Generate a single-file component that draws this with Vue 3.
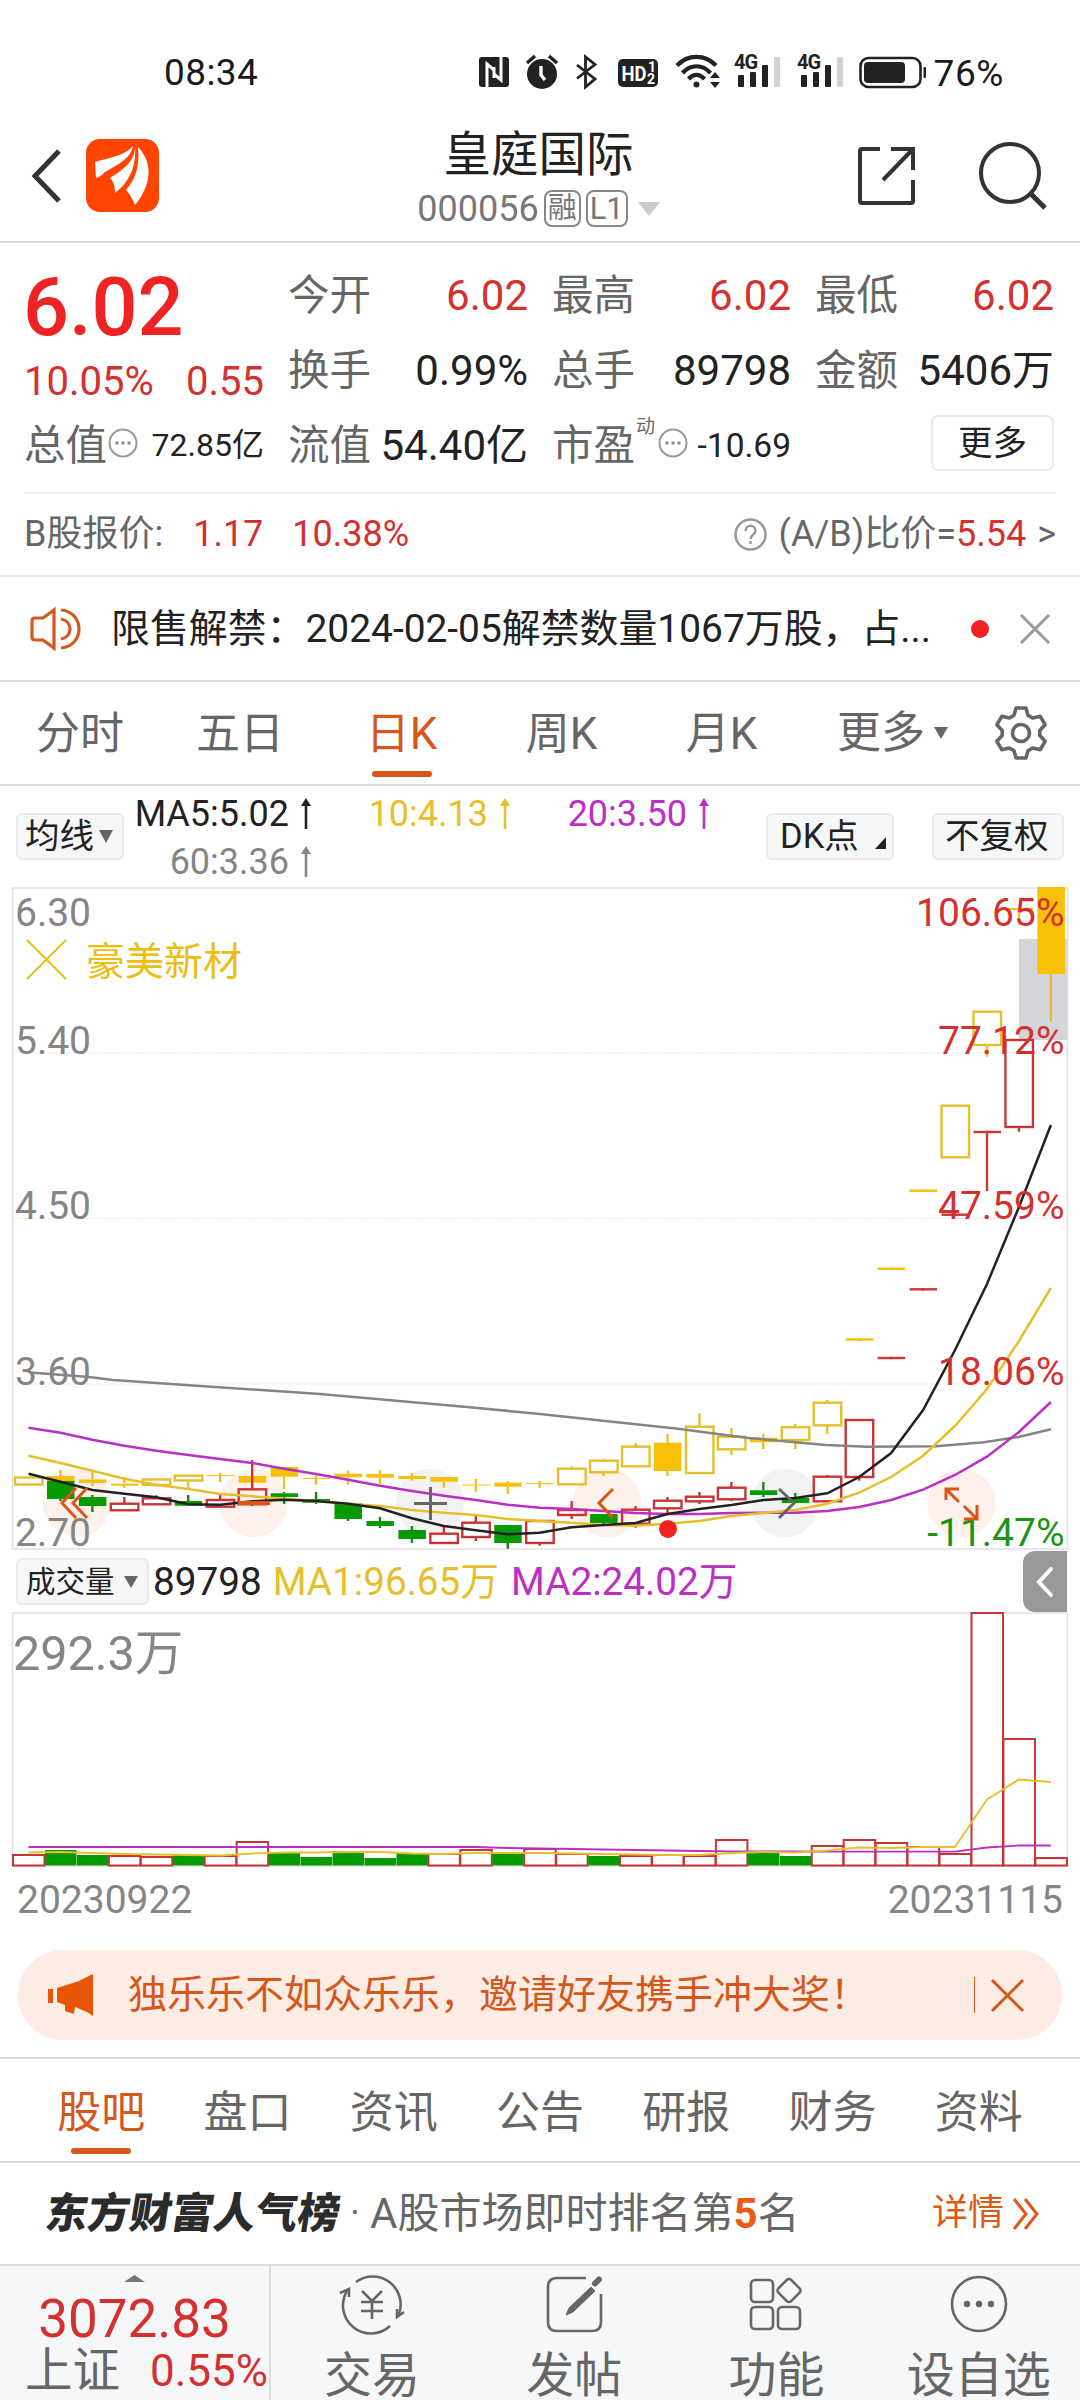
<template>
  <div class="page">
    <div class="status-bar">
      <span class="clock">08:34</span>
      <div class="status-right">
        <svg class="status-icons" width="454" height="40" viewBox="474 52 454 40">
          <!-- nfc -->
          <rect x="477" y="57" width="30" height="30" rx="3" fill="#222" />
          <path d="M485 87V64l7 6v8M499 57v23l-7-6v-7" fill="none" stroke="#fff" stroke-width="3" />
          <!-- alarm -->
          <circle cx="540" cy="74" r="15" fill="#222" />
          <path d="M525 63l8-7M555 63l-8-7" stroke="#222" stroke-width="3.4" />
          <path d="M539 66v9l4 5" fill="none" stroke="#fff" stroke-width="3.4" />
          <!-- bluetooth -->
          <path d="M575 65l18 14-9.500 8V57l9.500 7.500-18 14" fill="none" stroke="#222" stroke-width="2.800" />
          <!-- hd -->
          <rect x="616" y="59" width="40" height="28" rx="5" fill="#222" />
          <text x="619.500" y="81" class="hd" font-size="20" textLength="25" lengthAdjust="spacingAndGlyphs">HD</text>
          <text x="646" y="72" class="hd" font-size="14">1</text>
          <text x="645" y="84" class="hd" font-size="14">2</text>
          <!-- wifi -->
          <g fill="none" stroke="#222" stroke-width="4.200">
            <path d="M675 65.500c11-11.500 28-11.500 39 0" />
            <path d="M680.500 73c8-9 20-9 28 0" />
            <path d="M686.500 79c5-5.500 11-5.500 16 0" />
          </g>
          <circle cx="694.500" cy="84.500" r="3" fill="#222" />
          <path d="M708 78l5-6 5 6zM708 82l5 6 5-6z" fill="#222" />
          <!-- signal -->
          <g v-for="x in [732, 795]" :key="x" :transform="`translate(${x} 0)`">
            <text x="0" y="69" class="net">4G</text>
            <rect x="4" y="75" width="6" height="12" rx="1" fill="#222" />
            <rect x="16" y="72" width="6" height="15" rx="1" fill="#222" />
            <rect x="28" y="65" width="6" height="22" rx="1" fill="#222" />
            <rect x="40" y="57" width="6" height="30" rx="1" fill="#d2d2d2" />
          </g>
          <!-- battery -->
          <rect x="858.500" y="58" width="60" height="29" rx="8" fill="none" stroke="#222" stroke-width="2.600" />
          <rect x="862" y="62" width="41" height="21" rx="4" fill="#222" />
          <rect x="921.500" y="67" width="2.500" height="11" rx="1" fill="#222" />
        </svg>
        <span class="battery-text">76%</span>
      </div>
    </div>

    <header class="header">
      <div class="header-left">
        <svg width="32" height="56" viewBox="0 0 32 56">
          <path d="M29 3L5 28l24 25" fill="none" stroke="#333" stroke-width="5" />
        </svg>
        <svg class="logo" width="73" height="73" viewBox="0 0 73 73">
          <rect width="73" height="73" rx="14" fill="#ff4400" />
          <path d="M47 7C38 17 22 19 9 23l1 16c4-1 6-3 9-6 14-8 26-14 28-26z" fill="#fff" />
          <path d="M49 8c0 14-11 22-25 31 4 4 5 9 5 15 8-6 22-20 20-46z" fill="#fff" />
          <path d="M52 8c2 20-3 33-12 43 4 4 7 10 9 15 12-14 22-38 3-58z" fill="#fff" />
        </svg>
      </div>
      <div class="header-title">
        <div class="stock-name">皇庭国际</div>
        <div class="stock-code">
          <span>000056</span>
          <span class="tag">融</span>
          <span class="tag">L1</span>
          <svg class="code-arrow" width="22" height="14" viewBox="0 0 22 14"><path d="M0 0h22L11 14z" fill="#ccc" /></svg>
        </div>
      </div>
      <div class="header-right">
        <svg width="58" height="60" viewBox="0 0 58 60" fill="none" stroke="#333" stroke-width="4">
          <path d="M23 3H5q-2 0-2 2v50q0 2 2 2h49q2 0 2-2V34" />
          <path d="M34 3h22v21M56 3L26 34" />
        </svg>
        <svg width="68" height="68" viewBox="0 0 68 68" fill="none" stroke="#333" stroke-width="4">
          <circle cx="31" cy="31" r="29" />
          <path d="M51 51l15 15" stroke-width="5" />
        </svg>
      </div>
    </header>

    <section class="quote">
      <div class="quote-main">
        <div class="price-box">
          <div class="price">6.02</div>
          <div class="change"><span>10.05%</span><span>0.55</span></div>
        </div>
        <div v-for="q in quotes" :key="q.label" class="quote-cell">
          <span class="quote-label">{{ q.label }}</span>
          <span :class="q.up ? 'up' : 'plain'">{{ q.value }}</span>
        </div>
        <div class="quote-cell first">
          <span class="quote-label">总值</span>
          <svg class="more-dot" width="30" height="30" viewBox="0 0 30 30">
            <circle cx="15" cy="15" r="13.500" fill="none" stroke="#999" stroke-width="2" />
            <path d="M7.500 15h3M13.500 15h3M19.500 15h3" stroke="#888" stroke-width="3" />
          </svg>
          <span class="plain small">72.85亿</span>
        </div>
        <div class="quote-cell">
          <span class="quote-label">流值</span>
          <span class="plain">54.40亿</span>
        </div>
        <div class="quote-cell">
          <span class="quote-label">市盈<sup>动</sup></span>
          <svg class="more-dot" width="30" height="30" viewBox="0 0 30 30">
            <circle cx="15" cy="15" r="13.500" fill="none" stroke="#999" stroke-width="2" />
            <path d="M7.500 15h3M13.500 15h3M19.500 15h3" stroke="#888" stroke-width="3" />
          </svg>
          <span class="plain small pe">-10.69</span>
        </div>
        <div class="quote-cell last"><button class="more-btn">更多</button></div>
      </div>
      <div class="b-share">
        <span>B股报价:</span>
        <span class="up b-price">1.17</span>
        <span class="up b-rate">10.38%</span>
        <svg class="help" width="33" height="33" viewBox="0 0 33 33">
          <circle cx="16.500" cy="16.500" r="15" fill="none" stroke="#999" stroke-width="2.500" />
          <path d="M11.500 13c0-7 10-7 10 0 0 4-5 3.500-5 8M16.500 23v3" fill="none" stroke="#999" stroke-width="2.500" />
        </svg>
        <span>(A/B)比价=<b class="up">5.54</b></span>
        <span class="gt">&gt;</span>
      </div>
    </section>

    <section class="notice">
      <svg width="52" height="44" viewBox="0 0 52 44" fill="none" stroke="#d4581b" stroke-width="3.200">
        <path d="M24 3L13 11H5q-3 0-3 3v16q0 3 3 3h8l11 8z" />
        <path d="M31 3c24 2 24 36 0 38M31 12c12 2 12 18 0 20" />
      </svg>
      <span class="notice-text">限售解禁：2024-02-05解禁数量1067万股，占...</span>
      <i class="notice-dot"></i>
      <svg width="30" height="30" viewBox="0 0 30 30"><path d="M1 1l28 28M29 1L1 29" stroke="#999" stroke-width="3" /></svg>
    </section>

    <nav class="k-tabs">
      <div v-for="t in kTabs" :key="t" class="k-tab" :class="{ active: t === '日K' }">{{ t }}</div>
      <div class="k-tab k-more">
        更多
        <svg width="14" height="12" viewBox="0 0 14 12"><path d="M0 0h14L7 12z" fill="#666" /></svg>
      </div>
      <svg width="56" height="56" viewBox="-28 -28 56 56" fill="none" stroke="#666" stroke-width="3.600">
        <polygon :points="gearPoints" stroke-linejoin="round" />
        <circle r="8.500" />
      </svg>
    </nav>

    <div class="ma-bar">
      <button class="chip">均线<svg width="14" height="13" viewBox="0 0 14 13"><path d="M0 0h14L7 13z" fill="#666" /></svg></button>
      <div class="ma-list">
        <span v-for="m in maList" :key="m.text" class="ma-item" :style="{ color: m.color }">
          {{ m.text }}
          <svg width="12" height="32" viewBox="0 0 12 32">
            <path d="M6 0l5 8H1z" fill="currentColor" /><path d="M6 4v27" stroke="currentColor" stroke-width="2.600" />
          </svg>
        </span>
      </div>
      <button class="chip dk">DK点<svg width="11" height="12" viewBox="0 0 11 12"><path d="M11 0v12H0z" fill="#222" /></svg></button>
      <button class="chip fq">不复权</button>
    </div>

    <svg class="k-chart" width="1080" height="664" viewBox="0 0 1080 664">
      <rect x="12.500" y="1" width="1055" height="661" fill="none" stroke="#e0e0e0" stroke-width="1.500" />
      <path v-for="y in [166, 331.5, 497]" :key="y" :d="`M13 ${y}H1067`" stroke="#ededed" stroke-width="1.500" stroke-dasharray="2 1.500" />
      <circle v-for="b in chartButtons" :key="b.x" :cx="b.x" cy="616" r="34" :fill="b.fill" />
      <rect x="1019" y="52" width="48" height="101" fill="#d3d5d8" />

      <g v-for="(series, s) in [overlay, candles]" :key="s" stroke-width="2.400">
        <g v-for="c in series" :key="c[0]">
          <path :d="wick(c)" :stroke="colors[c[5]].line" fill="none" />
          <rect
            :x="cx(c[0]) - 13.5" :y="c[1]" width="27.5" :height="c[2] - c[1]"
            :fill="c[6] ? 'none' : colors[c[5]].fill"
            :stroke="c[6] ? colors[c[5]].line : 'none'"
          />
        </g>
      </g>

      <g fill="none" stroke-width="2.500">
        <polyline :points="ma60" stroke="#858585" />
        <polyline :points="line(ma20)" stroke="#bb2fc4" />
        <polyline :points="line(ma10)" stroke="#e6c02c" />
        <polyline :points="line(ma5)" stroke="#222" />
      </g>

      <g class="axis">
        <text v-for="(t, i) in leftAxis" :key="t" x="15" :y="axisY[i]" fill="#858585">{{ t }}</text>
        <text
          v-for="(t, i) in rightAxis" :key="t" x="1064.500" :y="axisY[i]"
          text-anchor="end" :fill="i === 4 ? '#1c9413' : '#d3302f'"
        >{{ t }}</text>
        <text x="86" y="88" fill="#ecbe12">豪美新材</text>
      </g>
      <path d="M27 53l39 39M66 53L27 92" stroke="#eabf1c" stroke-width="2" />

      <g fill="none" stroke="#dd5514" stroke-width="3">
        <path d="M76 601L62 616l14 15M87 601L73 616l14 15" />
        <path d="M238 616h32" stroke-width="4" />
        <path d="M613 602l-14 14 14 15" />
        <path d="M946 613v-11h13M947 603l12 12M977 618v14h-13M976 631l-12-12" />
      </g>
      <path d="M414 616.500h33M430.500 600v33M779 602l15 14-15 15" fill="none" stroke="#666" stroke-width="3" />
      <circle cx="668" cy="642" r="9" fill="#f02222" />
    </svg>

    <div class="vol-bar">
      <button class="chip vol">成交量<svg width="14" height="12" viewBox="0 0 14 12"><path d="M0 0h14L7 12z" fill="#666" /></svg></button>
      <span class="vol-now">89798</span>
      <span class="vol-ma1">MA1:96.65万</span>
      <span class="vol-ma2">MA2:24.02万</span>
      <div class="fold">
        <svg width="18" height="30" viewBox="0 0 18 30"><path d="M15 2L3 15l12 13" fill="none" stroke="#fff" stroke-width="4" stroke-linecap="round" /></svg>
      </div>
    </div>

    <svg class="vol-chart" width="1080" height="256" viewBox="0 0 1080 256">
      <rect x="12.500" y="1" width="1055" height="253" fill="none" stroke="#e0e0e0" stroke-width="1.500" />
      <rect
        v-for="(v, i) in volumes" :key="i"
        :x="cx(i) - 15.5" :y="254 - Math.abs(v)" width="31.5" :height="Math.abs(v) - 0.5"
        :fill="v < 0 ? '#069a04' : '#fff'" :stroke="v < 0 ? 'none' : '#c93434'" stroke-width="2"
      />
      <polyline :points="line(volMa2)" fill="none" stroke="#bb2fc4" stroke-width="1.800" />
      <polyline :points="line(volMa1)" fill="none" stroke="#e6c02c" stroke-width="1.800" />
      <text x="13" y="58" font-size="48.500" fill="#858585">292.3万</text>
    </svg>
    <div class="dates"><span>20230922</span><span>20231115</span></div>

    <div class="banner">
      <svg width="46" height="42" viewBox="0 0 46 42">
        <path d="M0 15h5v14H0zM9 14l22-7L45 0v42l-6-4-12-5-1 7-9-3v-6l-8-3z" fill="#e85505" />
      </svg>
      <span class="banner-text">独乐乐不如众乐乐，邀请好友携手冲大奖！</span>
      <i class="banner-sep"></i>
      <svg width="33" height="33" viewBox="0 0 33 33"><path d="M1 1l31 31M32 1L1 32" stroke="#d4581b" stroke-width="3" /></svg>
    </div>

    <nav class="info-tabs">
      <div v-for="(t, i) in infoTabs" :key="t" class="info-tab" :class="{ active: i === 0 }">{{ t }}</div>
    </nav>

    <section class="rank">
      <span class="rank-logo">东方财富人气榜</span>
      <span class="rank-sep">·</span>
      <span class="rank-text">A股市场即时排名第<b>5</b>名</span>
      <span class="rank-link">详情
        <svg width="28" height="32" viewBox="0 0 28 32"><path d="M2 1l12 15L2 31M13 1l12 15-12 15" fill="none" stroke="#dc5a18" stroke-width="3" /></svg>
      </span>
    </section>

    <footer class="footer">
      <div class="index">
        <svg width="21" height="7" viewBox="0 0 21 7"><path d="M0 7L10.500 0 21 7z" fill="#777" /></svg>
        <div class="index-value">3072.83</div>
        <div class="index-row"><span>上证</span><b>0.55%</b></div>
      </div>
      <div class="foot-item">
        <svg width="66" height="60" viewBox="0 0 66 60" fill="none" stroke="#666" stroke-width="2.600">
          <path d="M17 8a28 28 0 0 1 43 32M51 52A28 28 0 0 1 8 17" />
          <path d="M1 19l9-4 0 8M65 38l-7 5 0-8" />
          <path d="M23 17l10 10 10-10M33 27v18M22 28h22M22 37h22" />
        </svg>
        <span>交易</span>
      </div>
      <div class="foot-item">
        <svg width="60" height="60" viewBox="0 0 60 60" fill="none" stroke="#666" stroke-width="2.600">
          <path d="M42 4H13q-9 0-9 9v35q0 9 9 9h35q9 0 9-9V20" />
          <path d="M47 13l4 4-22 21-7 3 3-7z" fill="#666" stroke-width="1" />
          <path d="M51 9.500l4-4" stroke-width="6" stroke-linecap="round" />
        </svg>
        <span>发帖</span>
      </div>
      <div class="foot-item">
        <svg width="60" height="60" viewBox="0 0 60 60" fill="none" stroke="#666" stroke-width="2.600">
          <rect x="4" y="6" width="22" height="22" rx="4" />
          <rect x="4" y="33" width="22" height="22" rx="4" />
          <rect x="31" y="33" width="22" height="22" rx="4" />
          <rect x="33" y="7.500" width="18" height="18" rx="3" transform="rotate(45 42 16.500)" />
        </svg>
        <span>功能</span>
      </div>
      <div class="foot-item">
        <svg width="60" height="60" viewBox="0 0 60 60" fill="none" stroke="#666" stroke-width="2.600">
          <circle cx="30" cy="30" r="27" />
          <g fill="#666" stroke="none"><circle cx="18" cy="30" r="3.200" /><circle cx="30" cy="30" r="3.200" /><circle cx="42" cy="30" r="3.200" /></g>
        </svg>
        <span>设自选</span>
      </div>
    </footer>
  </div>
</template>

<script setup>
const quotes = [
  { label: '今开', value: '6.02', up: true },
  { label: '最高', value: '6.02', up: true },
  { label: '最低', value: '6.02', up: true },
  { label: '换手', value: '0.99%' },
  { label: '总手', value: '89798' },
  { label: '金额', value: '5406万' },
]

const kTabs = ['分时', '五日', '日K', '周K', '月K']
const infoTabs = ['股吧', '盘口', '资讯', '公告', '研报', '财务', '资料']

const maList = [
  { text: 'MA5:5.02', color: '#222' },
  { text: '10:4.13', color: '#e6c02c' },
  { text: '20:3.50', color: '#bb2fc4' },
  { text: '60:3.36', color: '#858585' },
]

const leftAxis = ['6.30', '5.40', '4.50', '3.60', '2.70']
const rightAxis = ['106.65%', '77.12%', '47.59%', '18.06%', '-11.47%']
const axisY = [39, 167, 332, 498, 658.5]

const chartButtons = [
  { x: 77, fill: '#fef0ea' },
  { x: 253.5, fill: '#fef0ea' },
  { x: 430, fill: '#f2f2f4' },
  { x: 607, fill: '#fef0ea' },
  { x: 785, fill: '#f2f2f4' },
  { x: 961.5, fill: '#fef0ea' },
]

const colors = {
  y: { line: '#e6c02c', fill: '#f7c004' },
  r: { line: '#c93434', fill: '#c93434' },
  g: { line: '#0c8c0a', fill: '#069a04' },
}

// [index, body top, body bottom, high, low, colour, hollow]
const overlay = [
  [0, 590.5, 597.5, 590.5, 597.5, 'y', 1],
  [1, 589, 594, 583, 594, 'y'],
  [2, 592.5, 596, 584, 599, 'y'],
  [3, 596.7, 598.7, 590, 601, 'y'],
  [4, 592.5, 598, 592.5, 600, 'y', 1],
  [5, 588.7, 593.5, 588.7, 602, 'y', 1],
  [6, 588, 589, 585.7, 595, 'y'],
  [7, 589, 595.7, 589, 601, 'y'],
  [8, 580, 589.7, 580, 602, 'y'],
  [9, 591, 592, 588.7, 597.7, 'y'],
  [10, 586.7, 590.3, 583.7, 597.7, 'y'],
  [11, 587, 590.7, 583, 597, 'y'],
  [12, 589, 592, 586, 593.7, 'y'],
  [13, 590, 594.7, 590, 600.7, 'y'],
  [14, 597.5, 598.5, 592, 604.7, 'y'],
  [15, 595.7, 599.7, 594, 607, 'y'],
  [16, 596, 597, 594, 601, 'y'],
  [17, 581.7, 597.3, 579.3, 597.3, 'y', 1],
  [18, 573.7, 585.3, 571.7, 589, 'y', 1],
  [19, 559.7, 579.3, 556, 579.3, 'y', 1],
  [20, 555.7, 584, 547, 589, 'y'],
  [21, 539.7, 586, 526, 586, 'y', 1],
  [22, 549.7, 562.3, 541, 568, 'y', 1],
  [23, 550.7, 555.3, 546.7, 562, 'y'],
  [24, 540.3, 553, 537, 562, 'y', 1],
  [25, 515.7, 538.3, 513, 547, 'y', 1],
  [26, 451.3, 453.7, 452, 453, 'y'],
  [27, 380.5, 382.9, 381, 382, 'y'],
  [28, 302.5, 304.9, 303, 304, 'y'],
  [29, 218.7, 270.3, 218.7, 270.3, 'y', 1],
  [30, 124.7, 158, 124.7, 169.7, 'y', 1],
  [31, 21, 23, 22, 38, 'y'],
  [32, 0, 87, 0, 134.7, 'y'],
]

const candles = [
  [1, 594, 612, 594, 614, 'g'],
  [2, 610, 619, 608, 625, 'g'],
  [3, 616.7, 623.3, 610, 623.3, 'r', 1],
  [4, 611.3, 617.3, 608.3, 617.3, 'r', 1],
  [5, 614, 618.7, 608, 618.7, 'g'],
  [6, 613, 619.7, 608, 619.7, 'r', 1],
  [7, 602.3, 617.3, 573, 619, 'r', 1],
  [8, 606.3, 610, 605, 617, 'g'],
  [9, 612, 615.7, 605, 617, 'g'],
  [10, 616.3, 632, 616.3, 634, 'g'],
  [11, 634, 639, 630, 641, 'g'],
  [12, 643, 652, 639, 656, 'g'],
  [13, 646.7, 656, 639, 656, 'r', 1],
  [14, 635.7, 650, 628, 654, 'r', 1],
  [15, 638, 656, 638, 661.7, 'g'],
  [16, 634, 656, 634, 658.7, 'r', 1],
  [17, 623, 628, 614, 632, 'r', 1],
  [18, 627, 636, 627, 637, 'g'],
  [19, 622.7, 636.7, 619, 640.7, 'r', 1],
  [20, 613.7, 621.3, 610, 626, 'r', 1],
  [21, 609.7, 614.3, 605, 617, 'r', 1],
  [22, 600.7, 612.3, 595, 614, 'r', 1],
  [23, 603.3, 608, 595, 610, 'g'],
  [24, 611, 616, 606, 616, 'g'],
  [25, 589.7, 614.3, 588, 614.3, 'r', 1],
  [26, 533, 590, 533, 593.7, 'r', 1],
  [27, 469.8, 472.2, 471, 472, 'r'],
  [28, 401.1, 403.5, 402, 403, 'r'],
  [29, 326.5, 328.9, 327, 328, 'r'],
  [30, 243.8, 246.2, 245, 304, 'r'],
  [31, 153, 240, 153, 244.7, 'r', 1],
]

const ma5 = [586.7, 594.7, 603, 606.7, 610.3, 617.3, 617.7, 614.3, 612.7, 614, 616.7, 621.3, 631.3, 639, 643.3, 647.3, 645.7, 640.3, 638, 636, 627, 622, 618, 613, 611, 606.3, 590, 566, 523, 463, 397, 320, 238]
const ma10 = [568.7, 576, 583.7, 591.7, 597.7, 602, 607, 609.3, 611.7, 614, 616.7, 619, 623, 625.7, 628, 632, 634, 635.7, 638, 638.7, 636.7, 634, 629, 626, 623, 616.7, 605.7, 590, 568.7, 539, 502, 454, 401]
const ma20 = [540.7, 545.7, 552.7, 558.7, 563.7, 568, 572, 576, 581.7, 587, 592.7, 598.7, 604, 608.7, 613, 617.7, 620.7, 622, 624, 626, 627, 627, 626, 625.7, 625.7, 624, 620, 613, 602.7, 588, 569.7, 545, 515]
const ma60 = '30,485.5 89,490 113,493 200,499 320,507 467,520 540,527 678,541.7 746,550.7 826,558 867,559.7 936,559.3 984,555.3 1018.6,550 1051,542.3'

// negative = falling day
const volumes = [11, -16, -11, 10, 9, -11, 10, 24, -13, -9, -15, -8, -13, 12, 16, -12, 17, 12, -10, 10, 11, 10, 26, -14, -10, 20, 26, 23, 19, 12, 253, 127, 8]
const volMa1 = [240.5, 240, 241, 242, 242.5, 243, 243.5, 241.5, 240.5, 240.5, 240, 240, 241.5, 242, 241, 241, 241, 241.5, 242, 242.5, 243, 243, 241, 240, 240.5, 238.5, 235.5, 236, 235, 235, 187.5, 167.5, 170]
const volMa2 = [235, 235, 235, 235, 235, 235, 235, 235, 235, 235, 235, 235, 235, 235, 235, 236, 236.5, 237, 237.5, 238, 238.5, 239, 239.3, 239.5, 239.5, 239.6, 239.6, 239.6, 239.6, 239.6, 235.5, 233.5, 233.5]

const cx = i => 28.5 + 31.95 * i

function line(values) {
  return values.map((v, i) => `${cx(i)},${v}`).join(' ')
}

function wick([i, top, bottom, high, low]) {
  return `M${cx(i)} ${high}V${top}M${cx(i)} ${bottom}V${low}`
}

const gearPoints = Array.from({ length: 6 }, (_, i) => i * 60 - 90)
  .flatMap(a => [[a - 22, 19], [a - 11, 25.5], [a + 11, 25.5], [a + 22, 19]])
  .map(([a, r]) => `${(Math.cos(a * Math.PI / 180) * r).toFixed(1)},${(Math.sin(a * Math.PI / 180) * r).toFixed(1)}`)
  .join(' ')
</script>

<style>
body { background: #fff; }
</style>

<style scoped>
.page {
  width: 1080px;
  height: 2400px;
  overflow: hidden;
  display: flex;
  flex-direction: column;
  font-family: Roboto, "Noto Sans CJK SC", sans-serif;
  color: #666;
  background: #fff;
}

.page > * { flex: none; box-sizing: border-box; }
svg { display: block; flex: none; overflow: visible; }
button { font-family: inherit; }
.up { color: #d3302f; font-weight: 400; }
.plain { color: #222; }

/* status bar */
.status-bar {
  height: 110px;
  padding: 34px 76px 0 164px;
  display: flex;
  align-items: center;
  justify-content: space-between;
  color: #1a1a1a;
}

.clock { font-size: 37px; letter-spacing: 0.4px; }
.status-right { display: flex; align-items: center; gap: 4px; }
.battery-text { font-size: 37px; letter-spacing: 0.6px; line-height: 40px; padding-top: 4px; }
.hd { fill: #fff; font-weight: 700; }
.net { fill: #222; font-size: 20px; font-weight: 700; letter-spacing: -1px; }

/* header */
.header {
  height: 133px;
  padding: 0 33px 0 30px;
  display: grid;
  grid-template-columns: 1fr auto 1fr;
  align-items: center;
  border-bottom: 2px solid #dcdcdc;
}

.header-left { display: flex; align-items: center; gap: 24px; }
.header-right { display: flex; align-items: center; justify-content: flex-end; gap: 64px; }

.header-title { display: flex; flex-direction: column; align-items: center; padding-top: 10px; }
.stock-name { font-size: 47.5px; line-height: 56px; color: #222; }

.stock-code {
  display: flex;
  align-items: center;
  height: 52px;
  font-size: 36px;
  color: #777;
}

.tag {
  box-sizing: border-box;
  height: 37px;
  padding: 0 2px;
  margin-left: 5px;
  border: 2px solid #888;
  border-radius: 8px;
  font-size: 29px;
  line-height: 33px;
}

.tag + .tag { font-size: 31px; padding: 0 2px; }
.code-arrow { margin-left: 10px; }

/* quote */
.quote { height: 334px; padding: 15px 24px 0 25px; border-bottom: 2px solid #e8e8e8; }

.quote-main {
  display: grid;
  grid-template-columns: 239px 239px 238px 238px;
  column-gap: 25px;
  grid-auto-rows: 75px;
  height: 236px;
  box-sizing: border-box;
  border-bottom: 2px solid #f2f2f2;
}

.price-box { grid-row: span 2; }
.price { font-size: 81px; line-height: 100px; font-weight: 500; color: #ee2424; margin-left: -2px; }

.change {
  display: flex;
  justify-content: space-between;
  font-size: 40px;
  line-height: 48px;
  margin-left: -1px;
  color: #d3302f;
}

.quote-cell {
  display: flex;
  align-items: center;
  justify-content: space-between;
  font-size: 42px;
  line-height: 75px;
  white-space: nowrap;
}

.quote-label { position: relative; margin-left: -1px; font-size: 41.5px; }
.quote-label sup { position: absolute; left: 84px; top: -19px; font-size: 19px; }
.small { font-size: 32px; }
.small.pe { font-size: 33.5px; }
.more-dot { margin: -6px auto 0 1px; }
.quote-label:has(sup) + .more-dot { margin-left: 23px; }
.last { justify-content: flex-end; }

.more-btn {
  width: 123px;
  height: 56px;
  margin-bottom: 5px;
  border: 2px solid #e9e9e9;
  border-radius: 7px;
  background: #fff;
  color: #222;
  font-size: 34.5px;
  line-height: 50px;
  padding: 0;
}

.b-share { display: flex; align-items: center; height: 80px; font-size: 36px; line-height: 80px; margin-left: -1px; }
.b-price { margin-left: 30px; }
.b-rate { margin-left: 29px; }
.help { margin: 0 12px 0 auto; }
.gt { margin-left: 11px; font-size: 36px; }

/* notice */
.notice {
  height: 105px;
  padding: 0 30px 0 30px;
  display: flex;
  align-items: center;
  border-bottom: 2px solid #dcdcdc;
}

.notice-text { margin-left: 29px; font-size: 38.9px; line-height: 102px; color: #222; white-space: nowrap; }
.notice-dot { width: 18px; height: 18px; margin: 0 31px 0 auto; border-radius: 50%; background: #f02222; }

/* k-line tabs */
.k-tabs { display: flex; align-items: center; height: 104px; border-bottom: 2px solid #dcdcdc; }

.k-tab {
  position: relative;
  box-sizing: border-box;
  width: 160px;
  height: 102px;
  text-align: center;
  font-size: 44px;
  line-height: 105px;
}

.k-tab:nth-child(n + 3) { left: 1.500px; }
.k-tab.k-more { left: -4px; width: 193px; display: flex; align-items: center; justify-content: center; gap: 9px; }
.active { color: #d4581b; }

.active::after {
  content: "";
  position: absolute;
  left: 50%;
  bottom: 7px;
  width: 60px;
  height: 6px;
  margin-left: -30px;
  border-radius: 3px;
  background: #d4581b;
}

/* moving averages */
.ma-bar { height: 101px; padding: 3px 16px 0; display: flex; align-items: center; }

.chip {
  box-sizing: border-box;
  display: flex;
  align-items: center;
  height: 47px;
  padding: 0 9px;
  border: 2px solid #e8eaed;
  border-radius: 6px;
  background: #f6f7f9;
  color: #222;
  font-size: 34.5px;
  line-height: 42px;
  white-space: nowrap;
}

.ma-bar .chip { margin-bottom: 4px; }
.ma-bar .chip:first-child { padding-left: 7px; }
.ma-bar .chip svg { margin-left: 5px; }

.ma-list {
  width: 572px;
  margin: 0 auto 0 16px;
  display: grid;
  grid-template-columns: 172px 199px 199px;
  grid-auto-rows: 48px;
  align-items: center;
}

.ma-item { display: flex; align-items: center; justify-content: flex-end; gap: 11px; font-size: 36px; }
.chip.dk { width: 128px; padding: 0 6px 0 12px; justify-content: space-between; }
.ma-bar .chip.dk svg { margin: 14px 0 0; }
.chip.fq { width: 132px; margin-left: 38px; padding: 0 0 0 11px; }

/* charts */
.axis { font-size: 39px; }

.vol-bar { height: 61px; padding-left: 16px; display: flex; align-items: center; font-size: 38.7px; line-height: 61px; }
.chip.vol { width: 133px; padding-left: 8px; font-size: 29.5px; justify-content: space-between; }
.vol-now { margin-left: 4px; color: #222; }
.vol-ma1 { margin-left: 11px; color: #e6c02c; }
.vol-ma2 { margin-left: 12px; color: #bb2fc4; }

.fold {
  display: flex;
  align-items: center;
  justify-content: center;
  width: 44px;
  height: 61px;
  margin: 0 13px 0 auto;
  border-radius: 12px 0 0 12px;
  background: #999;
}

.dates {
  display: flex;
  justify-content: space-between;
  height: 82px;
  padding: 0 17px;
  font-size: 39px;
  line-height: 65px;
  color: #858585;
}

/* banner */
.banner {
  display: flex;
  align-items: center;
  height: 90px;
  margin: 0 18px 17px;
  padding: 0 38px 0 30px;
  border-radius: 45px;
  background: #fcece3;
}

.banner-text { margin-left: 34px; font-size: 39px; line-height: 88px; color: #d4581b; white-space: nowrap; }
.banner-sep { width: 1.500px; height: 36px; margin: 0 16px 0 auto; background: #d4581b; }

/* info tabs */
.info-tabs {
  display: flex;
  height: 106px;
  padding: 0 28px;
  border-top: 2px solid #dcdcdc;
  border-bottom: 2px solid #dcdcdc;
}

.info-tab { position: relative; flex: 1; text-align: center; font-size: 44px; line-height: 108px; }

/* rank */
.rank { display: flex; align-items: center; height: 103px; padding: 0 40px 0 46px; border-bottom: 2px solid #dcdcdc; line-height: 103px; }

.rank-logo {
  font-size: 42px;
  font-weight: 900;
  color: #2b2b2b;
  transform: skewX(-9deg);
}

.rank-sep { width: 30px; text-align: center; font-size: 36px; }
.rank-text { font-size: 42px; white-space: nowrap; }
.rank-text b { font-weight: 700; color: #ee5a12; }
.rank-link { display: flex; align-items: center; gap: 8px; margin-left: auto; font-size: 36px; color: #dc5a18; }

/* footer */
.footer { display: flex; height: 136px; background: #f6f7f9; }

.index {
  box-sizing: border-box;
  width: 271px;
  padding-top: 9px;
  display: flex;
  flex-direction: column;
  align-items: center;
  border-right: 2px solid #dcdcdc;
}

.index-value { font-size: 53px; line-height: 60px; margin-top: 7px; color: #d3302f; }

.index-row {
  display: flex;
  justify-content: space-between;
  align-self: stretch;
  padding: 0 1px 0 25px;
  font-size: 47.5px;
  line-height: 44px;
}

.index-row b { font-size: 44px; font-weight: 400; color: #d3302f; }

.foot-item {
  flex: 1;
  display: flex;
  flex-direction: column;
  align-items: center;
  padding-top: 8px;
  font-size: 48px;
  line-height: 60px;
  white-space: nowrap;
}

.foot-item span { margin-top: 12px; }
</style>
